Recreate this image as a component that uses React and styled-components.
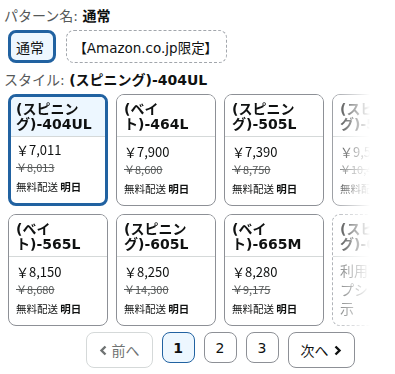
import React from "react";
import styled, { createGlobalStyle, css } from "styled-components";

const Global = createGlobalStyle`
  html, body { margin: 0; padding: 0; background: #fff; overflow: hidden; }
  body { font-family: "Noto Sans CJK JP", "DejaVu Sans", sans-serif; color: #0f1111; }
`;

const latin = `"DejaVu Sans", "Noto Sans CJK JP", sans-serif`;

const Page = styled.div`
  width: 424px;
  padding: 0 0 0 8px;
  display: flex;
  flex-direction: column;
`;

const Label = styled.div`
  font-family: ${latin};
  font-size: 14px;
  line-height: 20px;
  margin-left: -4px;
  color: #565959;
  padding-top: ${(p) => p.$top}px;
  b { color: #0f1111; font-weight: 700; }
`;

const ChipRow = styled.div`
  display: flex;
  gap: 10px;
  margin-top: 4px;
`;

const Chip = styled.div`
  height: 33px;
  box-sizing: border-box;
  border-radius: 8px;
  display: flex;
  align-items: center;
  font-size: 14px;
  color: #0f1111;
  ${(p) =>
    p.$selected
      ? css`
          border: 3px solid #2162a1;
          background: #edf7ff;
          padding: 0 9px 0 5px;
        `
      : css`
          border: 1px dashed #a2a6ac;
          padding: 0 15px 0 13px;
          font-family: ${latin};
          font-size: 13.5px;
          font-feature-settings: "palt";
        `}
`;

const Scroller = styled.div`
  margin-top: 4px;
  -webkit-mask-image: linear-gradient(to right, #000 318px, rgba(0,0,0,0) 362px);
  mask-image: linear-gradient(to right, #000 318px, rgba(0,0,0,0) 362px);
`;

const Grid = styled.div`
  display: grid;
  grid-template-columns: repeat(4, 100px);
  column-gap: 8px;
  row-gap: 8px;
`;

const Card = styled.div`
  height: 112px;
  box-sizing: border-box;
  border-radius: 8px;
  overflow: hidden;
  display: flex;
  flex-direction: column;
  ${(p) =>
    p.$selected
      ? css`
          border: 3px solid #2162a1;
        `
      : p.$dashed
      ? css`
          border: 1px dashed #a2a6ac;
        `
      : css`
          border: 1px solid #8d9096;
        `}
`;

const CardHead = styled.div`
  padding: ${(p) => (p.$selected ? "5px 2px 4px 5px" : "7px 4px 4px 7px")};
  border-bottom: 1px solid #d5d9d9;
  background: ${(p) => (p.$selected ? "#edf7ff" : "#fff")};
  font-family: ${latin};
  font-size: 14px;
  font-weight: 700;
  line-height: 15px;
  color: #0f1111;
  white-space: nowrap;
`;

const CardBody = styled.div`
  padding: ${(p) => (p.$selected ? "4px 2px 0 5px" : "6px 2px 0 7px")};
  display: flex;
  flex-direction: column;
`;

const Price = styled.div`
  font-size: 13px;
  line-height: 18px;
  color: #0f1111;
`;

const Strike = styled.div`
  font-size: 11px;
  line-height: 15px;
  margin-top: 1px;
  color: #565959;
  text-decoration: line-through;
`;

const Ship = styled.div`
  font-size: 10.5px;
  line-height: 14px;
  margin-top: 5px;
  color: #0f1111;
  b { font-weight: 700; }
`;

const Unavail = styled.div`
  font-size: 14px;
  line-height: 19px;
  color: #565959;
  margin-top: -2px;
`;

const Pager = styled.div`
  display: flex;
  justify-content: center;
  align-items: flex-start;
  gap: 9px;
  margin-top: 6px;
`;

const NavBtn = styled.div`
  width: 67px;
  height: 36px;
  box-sizing: border-box;
  border-radius: 8px;
  display: flex;
  align-items: center;
  justify-content: center;
  gap: 4px;
  font-size: 14px;
  border: 1px solid ${(p) => (p.$disabled ? "#d5d9d9" : "#8d9096")};
  color: ${(p) => (p.$disabled ? "#6f7373" : "#0f1111")};
`;

const PageNum = styled.div`
  width: 33px;
  height: 31px;
  box-sizing: border-box;
  border-radius: 8px;
  display: flex;
  align-items: center;
  justify-content: center;
  font-size: 14px;
  font-family: "DejaVu Sans", sans-serif;
  border: 1px solid ${(p) => (p.$active ? "#2162a1" : "#8d9096")};
  background: ${(p) => (p.$active ? "#edf7ff" : "#fff")};
  font-weight: ${(p) => (p.$active ? 700 : 400)};
`;

const Chevron = ({ dir, color }) => (
  <svg width="9" height="11" viewBox="0 0 9 11">
    <path
      d={dir === "left" ? "M6.5 1.5 L2.5 5.5 L6.5 9.5" : "M2.5 1.5 L6.5 5.5 L2.5 9.5"}
      fill="none"
      stroke={color}
      strokeWidth="2.4"
    />
  </svg>
);

const items = [
  { t1: "(スピニン", t2: "グ)-404UL", p: "￥7,011", s: "￥8,013", sel: true },
  { t1: "(ベイ", t2: "ト)-464L", p: "￥7,900", s: "￥8,600" },
  { t1: "(スピニン", t2: "グ)-505L", p: "￥7,390", s: "￥8,750" },
  { t1: "(スピニン", t2: "グ)-504UL", p: "￥9,580", s: "￥10,450" },
  { t1: "(ベイ", t2: "ト)-565L", p: "￥8,150", s: "￥8,680" },
  { t1: "(スピニン", t2: "グ)-605L", p: "￥8,250", s: "￥14,300" },
  { t1: "(ベイ", t2: "ト)-665M", p: "￥8,280", s: "￥9,175" },
  { t1: "(スピニン", t2: "グ)-604UL", dashed: true },
];

export default function App() {
  return (
    <>
      <Global />
      <Page>
        <Label $top={6}>
          パターン名: <b>通常</b>
        </Label>
        <ChipRow>
          <Chip $selected>通常</Chip>
          <Chip>【Amazon.co.jp限定】</Chip>
        </ChipRow>
        <Label $top={7}>
          スタイル: <b>(スピニング)-404UL</b>
        </Label>
        <Scroller>
          <Grid>
            {items.map((it, i) => (
              <Card key={i} $selected={it.sel} $dashed={it.dashed}>
                <CardHead $selected={it.sel}>
                  {it.t1}
                  <br />
                  {it.t2}
                </CardHead>
                <CardBody $selected={it.sel}>
                  {it.dashed ? (
                    <Unavail>利用可能なオプションを表示</Unavail>
                  ) : (
                    <>
                      <Price>{it.p}</Price>
                      <Strike>{it.s}</Strike>
                      <Ship>
                        無料配送 <b>明日</b>
                      </Ship>
                    </>
                  )}
                </CardBody>
              </Card>
            ))}
          </Grid>
        </Scroller>
        <Pager>
          <NavBtn $disabled>
            <Chevron dir="left" color="#6f7373" />
            前へ
          </NavBtn>
          <PageNum $active>1</PageNum>
          <PageNum>2</PageNum>
          <PageNum>3</PageNum>
          <NavBtn>
            次へ
            <Chevron dir="right" color="#0f1111" />
          </NavBtn>
        </Pager>
      </Page>
    </>
  );
}
